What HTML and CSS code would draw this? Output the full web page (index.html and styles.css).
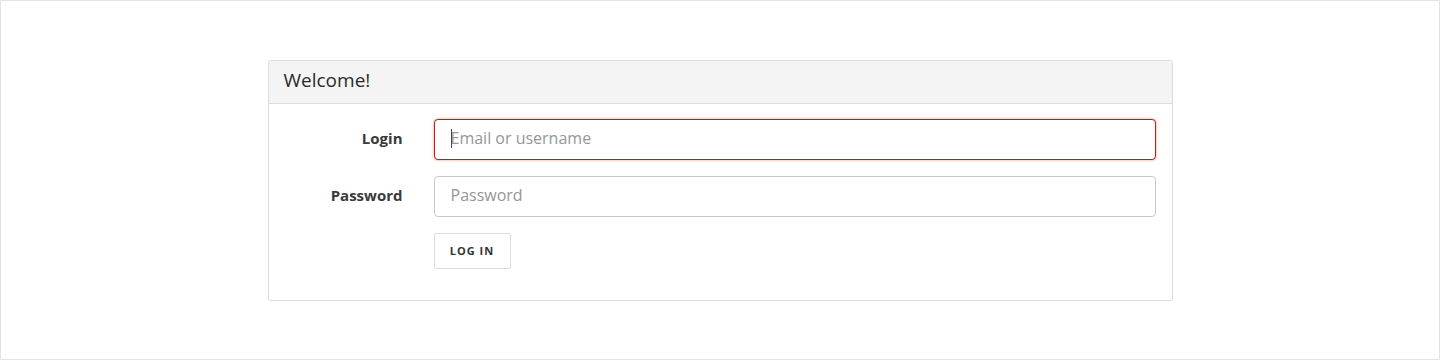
FILE: index.html
```html
<!DOCTYPE html>
<html lang="en">
<head>
<meta charset="utf-8">
<title>Welcome</title>
<link rel="stylesheet" href="styles.css">
</head>
<body>
<div class="frame">
  <div class="panel">
    <div class="panel-heading">Welcome!</div>
    <form class="panel-body">
      <div class="row">
        <label class="label" for="login">Login</label>
        <div class="field focused"><span class="caret"></span><input id="login" class="input" type="text" placeholder="Email or username"></div>
      </div>
      <div class="row">
        <label class="label" for="pw">Password</label>
        <div class="field"><input id="pw" class="input" type="password" placeholder="Password"></div>
      </div>
      <div class="row">
        <span></span>
        <div><button type="button" class="btn">LOG IN</button></div>
      </div>
    </form>
  </div>
</div>
</body>
</html>
```
FILE: styles.css
```css
html, body {
  margin: 0;
  padding: 0;
  background: #fff;
}
body {
  font-family: "Open Sans", "Liberation Sans", sans-serif;
  color: #333;
}
.frame {
  box-sizing: border-box;
  width: 1440px;
  height: 360px;
  border: 1px solid #e3e3e3;
  padding-top: 59px;
}
.panel {
  box-sizing: border-box;
  width: 905px;
  margin: 0 auto;
  border: 1px solid #dcdcdc;
  border-radius: 3px;
  background: #fff;
  height: 241px;
}
.panel-heading {
  box-sizing: border-box;
  height: 43px;
  background: #f4f4f4;
  border-bottom: 1px solid #dcdcdc;
  border-radius: 3px 3px 0 0;
  padding: 0 15px;
  font-size: 19px;
  line-height: 39px;
  color: #2b2b2b;
}
.panel-body {
  display: flex;
  flex-direction: column;
  gap: 16px;
  padding: 15px 16px 0 15px;
  margin: 0;
}
.row {
  display: grid;
  grid-template-columns: 119px 1fr;
  column-gap: 31px;
  align-items: center;
}
.label {
  text-align: right;
  font-weight: 700;
  font-size: 15px;
  line-height: 20px;
  padding-bottom: 4px;
  color: #3a3a3a;
}
.field {
  position: relative;
}
.input {
  box-sizing: border-box;
  width: 100%;
  height: 41px;
  border: 1px solid #c8c8c8;
  border-radius: 4px;
  padding: 0 16px 3px 16px;
  font-family: "Open Sans", "Liberation Sans", sans-serif;
  font-size: 16px;
  color: #333;
  outline: none;
  background: #fff;
}
.input::placeholder {
  color: #969696;
}
.focused .input {
  border-color: #c9190b;
  box-shadow: 0 0 3px rgba(201, 25, 11, 0.45);
}
.caret {
  position: absolute;
  left: 17px;
  top: 10px;
  width: 1px;
  height: 19px;
  background: #444;
}
.btn {
  box-sizing: border-box;
  height: 36px;
  width: 77px;
  border: 1px solid #ddd;
  border-radius: 2px;
  background: #fff;
  font-family: "Open Sans", "Liberation Sans", sans-serif;
  font-weight: 700;
  font-size: 11px;
  letter-spacing: 1px;
  color: #333;
  padding: 0 0 2px 0;
}
```
